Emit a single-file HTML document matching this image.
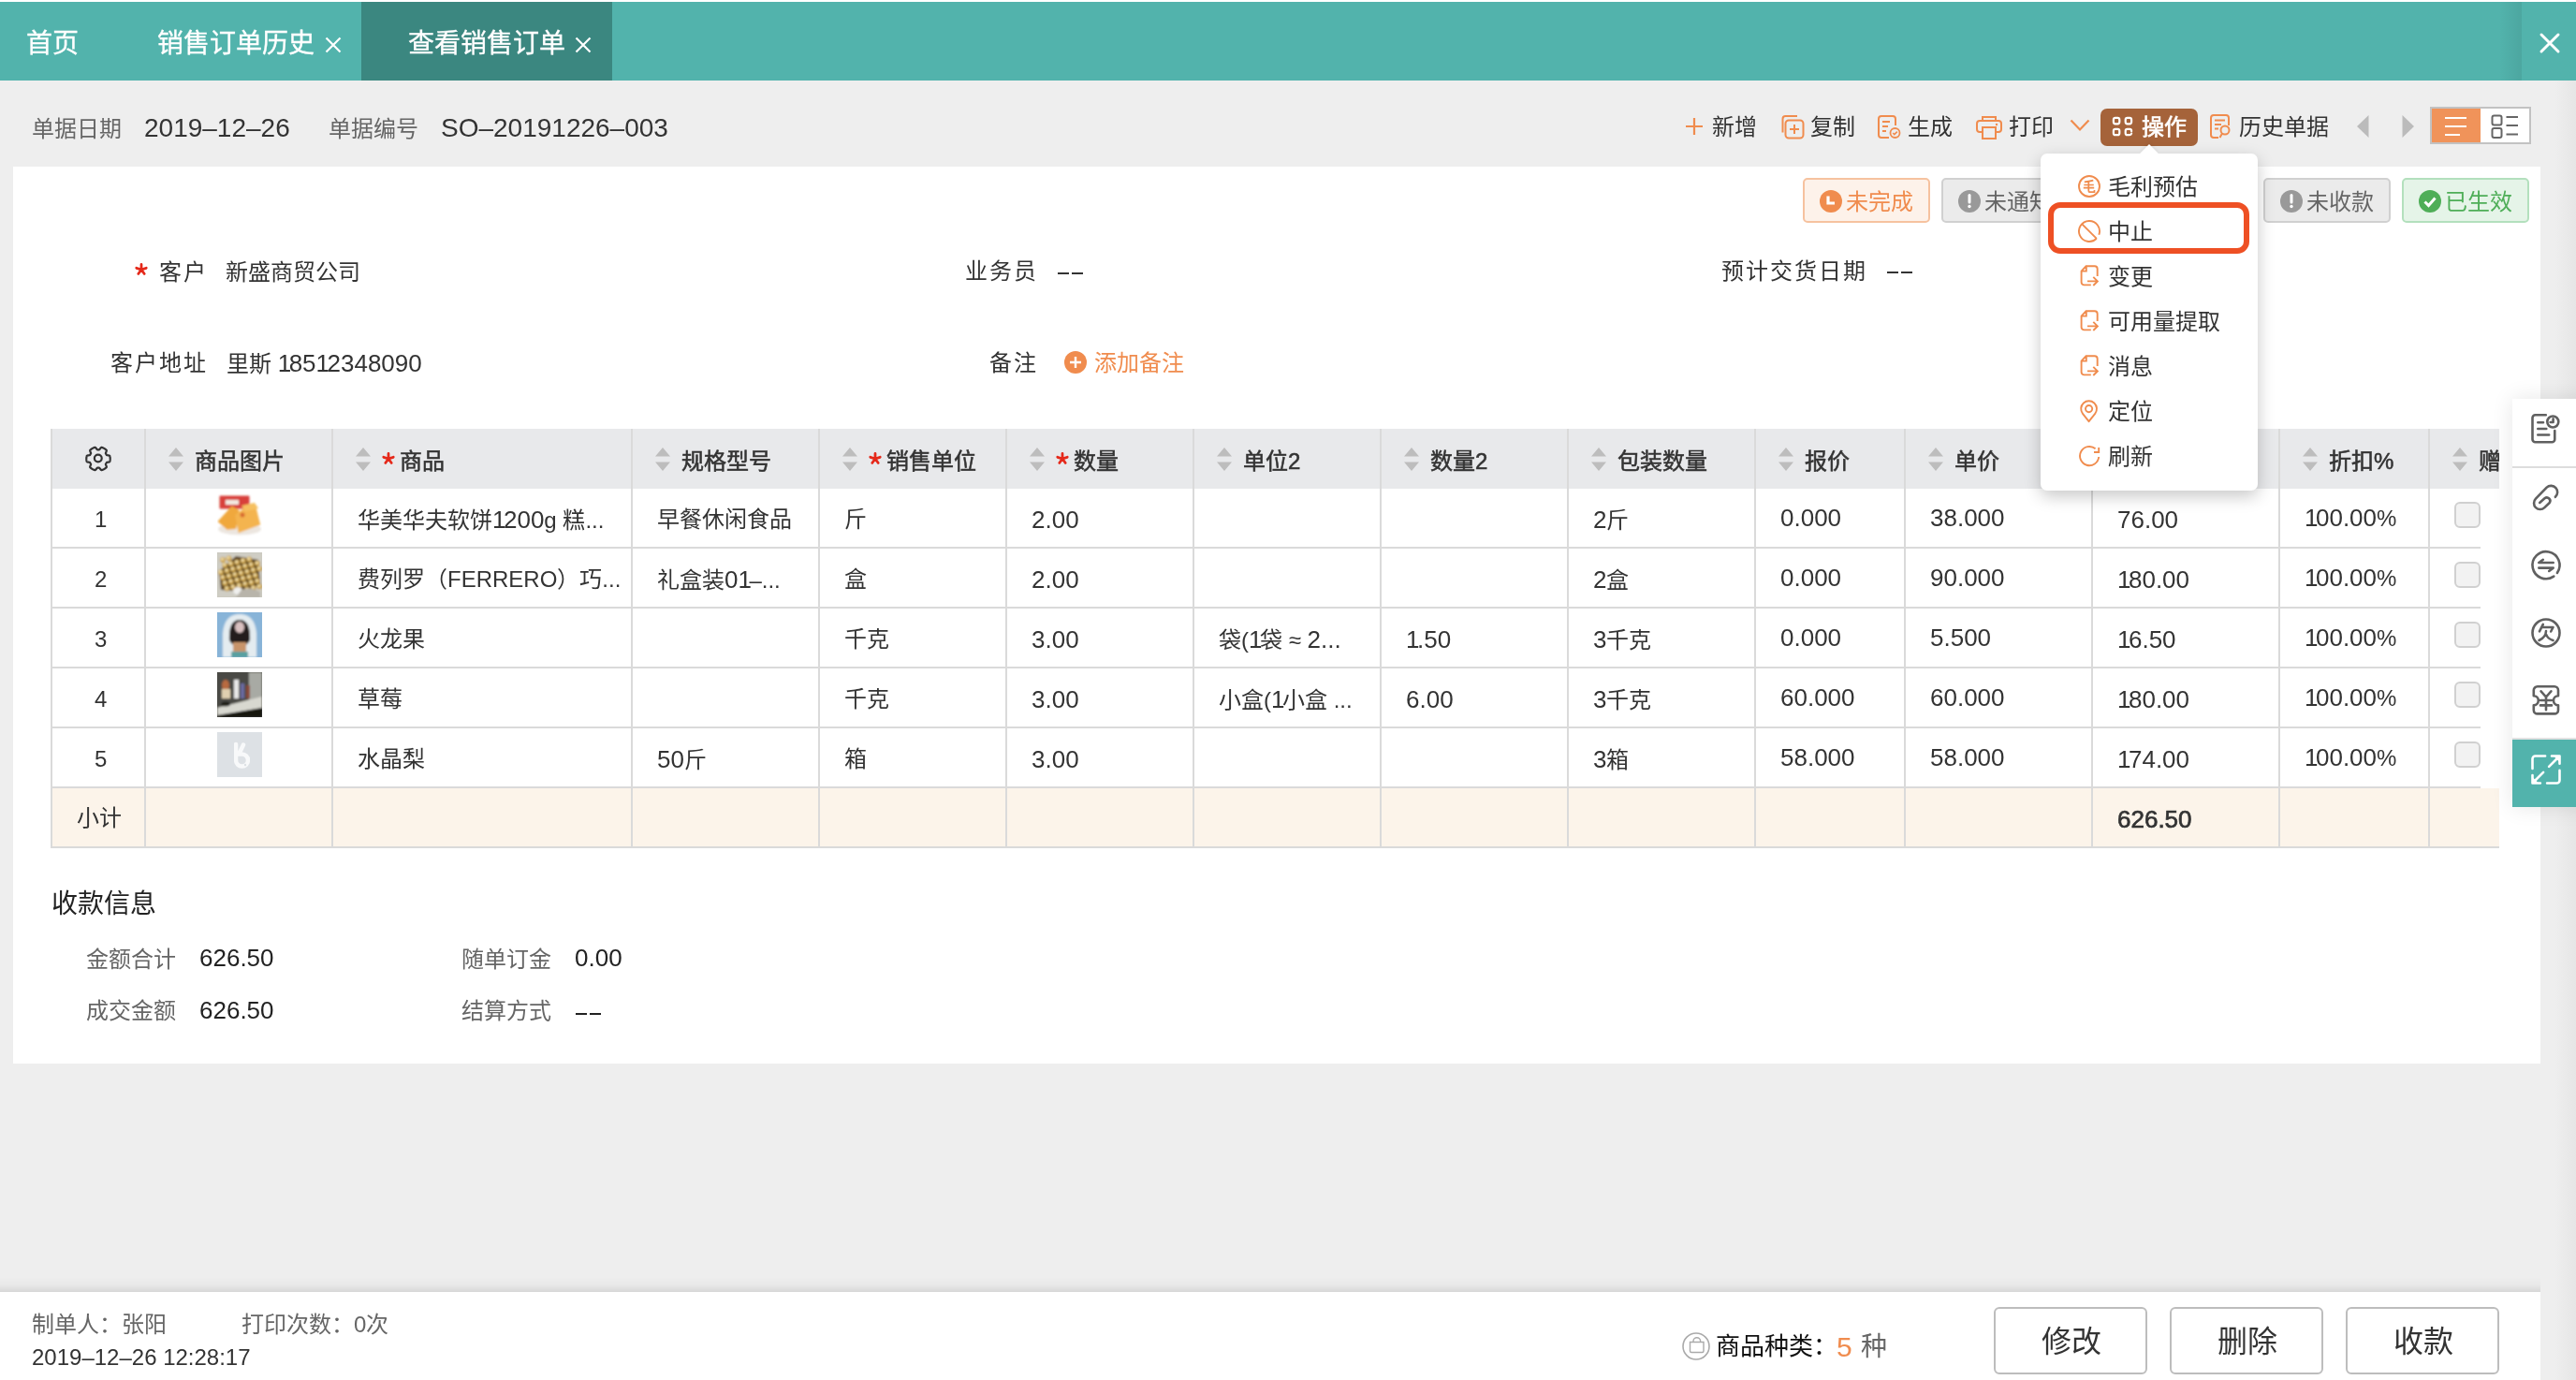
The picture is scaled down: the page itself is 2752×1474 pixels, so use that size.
<!DOCTYPE html>
<html lang="zh-CN"><head><meta charset="utf-8"><title>查看销售订单</title>
<style>
html,body{margin:0;padding:0}
body{width:2752px;height:1474px;position:relative;overflow:hidden;background:#eeeeee;font-family:"Liberation Sans",sans-serif;}
.a{position:absolute;display:block}
.t{position:absolute;white-space:nowrap;line-height:40px;will-change:transform}
.ls{letter-spacing:2px}
.b{font-weight:bold}
</style></head><body>
<div class="a" style="left:0px;top:0px;width:2752px;height:2px;background:#fff"></div>
<div class="a" style="left:0px;top:2px;width:2752px;height:84px;background:#52b3ac"></div>
<div class="a" style="left:386px;top:2px;width:268px;height:84px;background:#3b8780"></div>
<div class="t" style="left:28px;top:26.5px;font-size:28px;color:#fff;-webkit-text-stroke:0.35px #fff">首页</div>
<div class="t" style="left:168px;top:26.5px;font-size:28px;color:#fff;-webkit-text-stroke:0.35px #fff">销售订单历史</div>
<svg class="a" style="left:347px;top:39px;" width="18" height="18" viewBox="0 0 18 18"><path d="M1.5 1.5L16.5 16.5M16.5 1.5L1.5 16.5" stroke="#fff" stroke-width="2.2"/></svg>
<div class="t" style="left:436px;top:26.5px;font-size:28px;color:#fff;-webkit-text-stroke:0.35px #fff">查看销售订单</div>
<svg class="a" style="left:614px;top:39px;" width="18" height="18" viewBox="0 0 18 18"><path d="M1.5 1.5L16.5 16.5M16.5 1.5L1.5 16.5" stroke="#fff" stroke-width="2.2"/></svg>
<div class="a" style="left:2670px;top:2px;width:24px;height:84px;background:linear-gradient(90deg,rgba(0,0,0,0),rgba(0,0,0,0.07))"></div>
<svg class="a" style="left:2712px;top:34px;" width="24" height="24" viewBox="0 0 24 24"><path d="M3 3L21 21M21 3L3 21" stroke="#fff" stroke-width="3" stroke-linecap="round"/></svg>
<div class="t" style="left:34px;top:118.0px;font-size:24px;color:#666;">单据日期</div>
<div class="t" style="left:154px;top:117.0px;font-size:28px;color:#333;">2019–12–26</div>
<div class="t" style="left:351px;top:118.0px;font-size:24px;color:#666;">单据编号</div>
<div class="t" style="left:471px;top:117.0px;font-size:28px;color:#333;">SO–20191226–003</div>
<svg class="a" style="left:1800px;top:125px;" width="20" height="20" viewBox="0 0 20 20"><path d="M10 1V19M1 10H19" stroke="#f08c4e" stroke-width="2.2"/></svg>
<div class="t" style="left:1829px;top:116.0px;font-size:24px;color:#333;">新增</div>
<svg class="a" style="left:1901px;top:122px;" width="27" height="27" viewBox="0 0 27 27"><rect x="6.5" y="6.5" width="19" height="19" rx="3.5" fill="none" stroke="#f08c4e" stroke-width="2"/><path d="M3.5 19.5V5a3 3 0 0 1 3-3H19" fill="none" stroke="#f08c4e" stroke-width="2"/><path d="M16 11V21M11 16H21" stroke="#f08c4e" stroke-width="2"/></svg>
<div class="t" style="left:1934px;top:116.0px;font-size:24px;color:#333;">复制</div>
<svg class="a" style="left:2005px;top:122px;" width="26" height="27" viewBox="0 0 26 27"><path d="M13 25H5a3 3 0 0 1-3-3V5a3 3 0 0 1 3-3h12a3 3 0 0 1 3 3V12" fill="none" stroke="#f08c4e" stroke-width="2"/><path d="M6 8H14M6 13H12M6 18H10" stroke="#f08c4e" stroke-width="2"/><circle cx="19.5" cy="20" r="5" fill="none" stroke="#f08c4e" stroke-width="1.8"/><path d="M17.2 20l1.6 1.6 3-3" fill="none" stroke="#f08c4e" stroke-width="1.6"/></svg>
<div class="t" style="left:2038px;top:116.0px;font-size:24px;color:#333;">生成</div>
<svg class="a" style="left:2111px;top:122px;" width="28" height="27" viewBox="0 0 28 27"><path d="M7 7V3h14v4" fill="none" stroke="#f08c4e" stroke-width="2"/><path d="M7 19H4a3 3 0 0 1-3-3V10a3 3 0 0 1 3-3h20a3 3 0 0 1 3 3v6a3 3 0 0 1-3 3h-3" fill="none" stroke="#f08c4e" stroke-width="2"/><rect x="7" y="14" width="14" height="12" fill="none" stroke="#f08c4e" stroke-width="2"/><circle cx="22" cy="11" r="1.2" fill="#f08c4e"/></svg>
<div class="t" style="left:2146px;top:116.0px;font-size:24px;color:#333;">打印</div>
<svg class="a" style="left:2211px;top:127px;" width="22" height="14" viewBox="0 0 22 14"><path d="M1.5 1.5L11 11.5L20.5 1.5" fill="none" stroke="#f08c4e" stroke-width="2.2"/></svg>
<div class="a" style="left:2244px;top:116px;width:104px;height:40px;background:#a5633a;border-radius:7px"></div>
<svg class="a" style="left:2256px;top:124px;" width="24" height="24" viewBox="0 0 24 24"><g fill="none" stroke="#fff" stroke-width="2.2" stroke-linecap="round"><rect x="1.9" y="1.9" width="6.4" height="6.4" rx="2"/><rect x="14.7" y="1.9" width="6.4" height="6.4" rx="2"/><rect x="1.9" y="13.8" width="6.4" height="6.4" rx="2"/><path d="M21.1 16.2V15.8A2 2 0 0 0 19.1 13.8H16.7A2 2 0 0 0 14.7 15.8V18.2A2 2 0 0 0 16.7 20.2H19.1A2 2 0 0 0 21.1 18.6"/></g></svg>
<div class="t" style="left:2288px;top:116.0px;font-size:24px;color:#fff;-webkit-text-stroke:0.6px #fff">操作</div>
<svg class="a" style="left:2361px;top:122px;" width="23" height="27" viewBox="0 0 23 27"><path d="M9 25H4a3 3 0 0 1-3-3V4a3 3 0 0 1 3-3h13a3 3 0 0 1 3 3V12" fill="none" stroke="#f08c4e" stroke-width="2"/><path d="M5 6.5H16M5 11H12M5 15.5H9" stroke="#f08c4e" stroke-width="2"/><circle cx="16" cy="17" r="4.5" fill="none" stroke="#f08c4e" stroke-width="2"/><path d="M13 20.5L10.5 25" stroke="#f08c4e" stroke-width="2"/></svg>
<div class="t" style="left:2392px;top:116.0px;font-size:24px;color:#333;">历史单据</div>
<svg class="a" style="left:2518px;top:123px;" width="13" height="24" viewBox="0 0 13 24"><path d="M12.5 0V24L0 12Z" fill="#bbb"/></svg>
<svg class="a" style="left:2566px;top:123px;" width="13" height="24" viewBox="0 0 13 24"><path d="M0.5 0V24L13 12Z" fill="#bbb"/></svg>
<div class="a" style="left:2596px;top:114px;width:108px;height:40px;box-sizing:border-box;border:2px solid #c2c2c2;background:#fff"></div>
<div class="a" style="left:2598px;top:116px;width:52px;height:36px;background:#f0935a"></div>
<svg class="a" style="left:2611px;top:124px;" width="26" height="22" viewBox="0 0 26 22"><path d="M1 2H24M1 11H24M1 20H17" stroke="#fff" stroke-width="2"/></svg>
<svg class="a" style="left:2661px;top:122px;" width="30" height="27" viewBox="0 0 30 27"><g fill="none" stroke="#666" stroke-width="2"><rect x="1.5" y="1.5" width="10" height="10" rx="2"/><rect x="1.5" y="15" width="10" height="10" rx="2"/></g><path d="M16.5 3H29M16.5 12H29M16.5 21.5H29" stroke="#666" stroke-width="2"/></svg>
<div class="a" style="left:14px;top:178px;width:2700px;height:958px;background:#fff"></div>
<div class="a" style="left:2714px;top:86px;width:38px;height:1388px;background:linear-gradient(90deg,#eeeeee 40%,#e6e6e6)"></div>
<div class="a" style="left:1926px;top:190px;width:136px;height:48px;box-sizing:border-box;border:2px solid #f6c29f;background:#fdf2ea;border-radius:5px"></div>
<svg class="a" style="left:1944px;top:203px;" width="24" height="24" viewBox="0 0 24 24"><circle cx="12" cy="12" r="12" fill="#f08c4e"/><path d="M9 6.5V14H16" fill="none" stroke="#fff" stroke-width="3.2"/></svg>
<div class="t" style="left:1972px;top:196.0px;font-size:24px;color:#f08c4e;">未完成</div>
<div class="a" style="left:2074px;top:190px;width:136px;height:48px;box-sizing:border-box;border:2px solid #d0d0d0;background:#ebebeb;border-radius:5px"></div>
<svg class="a" style="left:2092px;top:203px;" width="24" height="24" viewBox="0 0 24 24"><circle cx="12" cy="12" r="12" fill="#999"/><path d="M12 5.5V13" stroke="#fff" stroke-width="3" stroke-linecap="round"/><circle cx="12" cy="17.5" r="1.7" fill="#fff"/></svg>
<div class="t" style="left:2120px;top:196.0px;font-size:24px;color:#666;">未通知</div>
<div class="a" style="left:2222px;top:190px;width:136px;height:48px;box-sizing:border-box;border:2px solid #d0d0d0;background:#ebebeb;border-radius:5px"></div>
<svg class="a" style="left:2240px;top:203px;" width="24" height="24" viewBox="0 0 24 24"><circle cx="12" cy="12" r="12" fill="#999"/><path d="M12 5.5V13" stroke="#fff" stroke-width="3" stroke-linecap="round"/><circle cx="12" cy="17.5" r="1.7" fill="#fff"/></svg>
<div class="t" style="left:2268px;top:196.0px;font-size:24px;color:#666;">未审核</div>
<div class="a" style="left:2418px;top:190px;width:136px;height:48px;box-sizing:border-box;border:2px solid #d0d0d0;background:#ebebeb;border-radius:5px"></div>
<svg class="a" style="left:2436px;top:203px;" width="24" height="24" viewBox="0 0 24 24"><circle cx="12" cy="12" r="12" fill="#999"/><path d="M12 5.5V13" stroke="#fff" stroke-width="3" stroke-linecap="round"/><circle cx="12" cy="17.5" r="1.7" fill="#fff"/></svg>
<div class="t" style="left:2464px;top:196.0px;font-size:24px;color:#666;">未收款</div>
<div class="a" style="left:2566px;top:190px;width:136px;height:48px;box-sizing:border-box;border:2px solid #b3e0bd;background:#e5f4e8;border-radius:5px"></div>
<svg class="a" style="left:2584px;top:203px;" width="24" height="24" viewBox="0 0 24 24"><circle cx="12" cy="12" r="12" fill="#4fae58"/><path d="M6.5 12.5L10.5 16.5L17.5 8.5" fill="none" stroke="#fff" stroke-width="3"/></svg>
<div class="t" style="left:2612px;top:196.0px;font-size:24px;color:#4fae58;">已生效</div>
<svg class="a" style="left:144.00px;top:281.40px" width="14.00" height="14.00"><path d="M7.00 7.00L7.00 1.50M7.00 7.00L12.23 5.30M7.00 7.00L10.23 11.45M7.00 7.00L3.77 11.45M7.00 7.00L1.77 5.30" stroke="#e5291a" stroke-width="2.8" stroke-linecap="round"/></svg>
<div class="t" style="left:170px;top:271.0px;font-size:24px;color:#333;letter-spacing:2px">客户</div>
<div class="t" style="left:241px;top:271.0px;font-size:24px;color:#333;">新盛商贸公司</div>
<div class="t" style="left:1031px;top:270.0px;font-size:24px;color:#333;letter-spacing:2px">业务员</div>
<div class="a" style="left:1130px;top:290.5px;width:12px;height:2.0px;background:#333"></div>
<div class="a" style="left:1144.5px;top:290.5px;width:12.0px;height:2.0px;background:#333"></div>
<div class="t" style="left:1839px;top:270.0px;font-size:24px;color:#333;letter-spacing:2px">预计交货日期</div>
<div class="a" style="left:2016px;top:290px;width:12px;height:2px;background:#333"></div>
<div class="a" style="left:2030.5px;top:290px;width:12.0px;height:2px;background:#333"></div>
<div class="t" style="left:118px;top:367.5px;font-size:24px;color:#333;letter-spacing:2px">客户地址</div>
<div class="t" style="left:242px;top:367.5px;font-size:24px;color:#333;">里斯 <span style="font-size:26px"><span style="letter-spacing:-2.5px">1</span>85<span style="letter-spacing:-2.5px">1</span>2348090</span></div>
<div class="t" style="left:1057px;top:368.0px;font-size:24px;color:#333;letter-spacing:2px">备注</div>
<svg class="a" style="left:1137px;top:375px;" width="24" height="24" viewBox="0 0 24 24"><circle cx="12" cy="12" r="12" fill="#f08c4e"/><path d="M12 6V18M6 12H18" stroke="#fff" stroke-width="2.4"/></svg>
<div class="t" style="left:1169px;top:368.0px;font-size:24px;color:#f08c4e;">添加备注</div>
<div class="a" style="left:0;top:0;width:2670px;height:1474px;overflow:hidden">
<div class="a" style="left:54px;top:458px;width:2616px;height:64px;background:#e8e9eb"></div>
<div class="a" style="left:54px;top:842px;width:2616px;height:62px;background:#fcf4ea"></div>
<div class="a" style="left:54px;top:584px;width:2596px;height:2px;background:#dadada"></div>
<div class="a" style="left:54px;top:648px;width:2596px;height:2px;background:#dadada"></div>
<div class="a" style="left:54px;top:712px;width:2596px;height:2px;background:#dadada"></div>
<div class="a" style="left:54px;top:776px;width:2596px;height:2px;background:#dadada"></div>
<div class="a" style="left:54px;top:840px;width:2596px;height:2px;background:#dadada"></div>
<div class="a" style="left:54px;top:904px;width:2616px;height:2px;background:#dadada"></div>
<div class="a" style="left:54px;top:458px;width:2px;height:448px;background:#dadada"></div>
<div class="a" style="left:154px;top:458px;width:2px;height:448px;background:#dadada"></div>
<div class="a" style="left:354px;top:458px;width:2px;height:448px;background:#dadada"></div>
<div class="a" style="left:674px;top:458px;width:2px;height:448px;background:#dadada"></div>
<div class="a" style="left:874px;top:458px;width:2px;height:448px;background:#dadada"></div>
<div class="a" style="left:1074px;top:458px;width:2px;height:448px;background:#dadada"></div>
<div class="a" style="left:1274px;top:458px;width:2px;height:448px;background:#dadada"></div>
<div class="a" style="left:1474px;top:458px;width:2px;height:448px;background:#dadada"></div>
<div class="a" style="left:1674px;top:458px;width:2px;height:448px;background:#dadada"></div>
<div class="a" style="left:1874px;top:458px;width:2px;height:448px;background:#dadada"></div>
<div class="a" style="left:2034px;top:458px;width:2px;height:448px;background:#dadada"></div>
<div class="a" style="left:2234px;top:458px;width:2px;height:448px;background:#dadada"></div>
<div class="a" style="left:2434px;top:458px;width:2px;height:448px;background:#dadada"></div>
<div class="a" style="left:2594px;top:458px;width:2px;height:448px;background:#dadada"></div>
<svg class="a" style="left:180px;top:478px;" width="16" height="25" viewBox="0 0 16 25"><path d="M8 0L16 9.5H0Z M0 15.5H16L8 25Z" fill="#bdbdbd"/></svg>
<div class="t" style="left:208px;top:472.5px;font-size:24px;color:#333;-webkit-text-stroke:0.55px #333">商品图片</div>
<svg class="a" style="left:380px;top:478px;" width="16" height="25" viewBox="0 0 16 25"><path d="M8 0L16 9.5H0Z M0 15.5H16L8 25Z" fill="#bdbdbd"/></svg>
<svg class="a" style="left:408.20px;top:483.10px" width="14.00" height="14.00"><path d="M7.00 7.00L7.00 1.50M7.00 7.00L12.23 5.30M7.00 7.00L10.23 11.45M7.00 7.00L3.77 11.45M7.00 7.00L1.77 5.30" stroke="#e5291a" stroke-width="2.8" stroke-linecap="round"/></svg>
<div class="t" style="left:427px;top:472.5px;font-size:24px;color:#333;-webkit-text-stroke:0.55px #333">商品</div>
<svg class="a" style="left:700px;top:478px;" width="16" height="25" viewBox="0 0 16 25"><path d="M8 0L16 9.5H0Z M0 15.5H16L8 25Z" fill="#bdbdbd"/></svg>
<div class="t" style="left:728px;top:472.5px;font-size:24px;color:#333;-webkit-text-stroke:0.55px #333">规格型号</div>
<svg class="a" style="left:900px;top:478px;" width="16" height="25" viewBox="0 0 16 25"><path d="M8 0L16 9.5H0Z M0 15.5H16L8 25Z" fill="#bdbdbd"/></svg>
<svg class="a" style="left:928.20px;top:483.10px" width="14.00" height="14.00"><path d="M7.00 7.00L7.00 1.50M7.00 7.00L12.23 5.30M7.00 7.00L10.23 11.45M7.00 7.00L3.77 11.45M7.00 7.00L1.77 5.30" stroke="#e5291a" stroke-width="2.8" stroke-linecap="round"/></svg>
<div class="t" style="left:947px;top:472.5px;font-size:24px;color:#333;-webkit-text-stroke:0.55px #333">销售单位</div>
<svg class="a" style="left:1100px;top:478px;" width="16" height="25" viewBox="0 0 16 25"><path d="M8 0L16 9.5H0Z M0 15.5H16L8 25Z" fill="#bdbdbd"/></svg>
<svg class="a" style="left:1128.20px;top:483.10px" width="14.00" height="14.00"><path d="M7.00 7.00L7.00 1.50M7.00 7.00L12.23 5.30M7.00 7.00L10.23 11.45M7.00 7.00L3.77 11.45M7.00 7.00L1.77 5.30" stroke="#e5291a" stroke-width="2.8" stroke-linecap="round"/></svg>
<div class="t" style="left:1147px;top:472.5px;font-size:24px;color:#333;-webkit-text-stroke:0.55px #333">数量</div>
<svg class="a" style="left:1300px;top:478px;" width="16" height="25" viewBox="0 0 16 25"><path d="M8 0L16 9.5H0Z M0 15.5H16L8 25Z" fill="#bdbdbd"/></svg>
<div class="t" style="left:1328px;top:472.5px;font-size:24px;color:#333;-webkit-text-stroke:0.55px #333">单位2</div>
<svg class="a" style="left:1500px;top:478px;" width="16" height="25" viewBox="0 0 16 25"><path d="M8 0L16 9.5H0Z M0 15.5H16L8 25Z" fill="#bdbdbd"/></svg>
<div class="t" style="left:1528px;top:472.5px;font-size:24px;color:#333;-webkit-text-stroke:0.55px #333">数量2</div>
<svg class="a" style="left:1700px;top:478px;" width="16" height="25" viewBox="0 0 16 25"><path d="M8 0L16 9.5H0Z M0 15.5H16L8 25Z" fill="#bdbdbd"/></svg>
<div class="t" style="left:1728px;top:472.5px;font-size:24px;color:#333;-webkit-text-stroke:0.55px #333">包装数量</div>
<svg class="a" style="left:1900px;top:478px;" width="16" height="25" viewBox="0 0 16 25"><path d="M8 0L16 9.5H0Z M0 15.5H16L8 25Z" fill="#bdbdbd"/></svg>
<div class="t" style="left:1928px;top:472.5px;font-size:24px;color:#333;-webkit-text-stroke:0.55px #333">报价</div>
<svg class="a" style="left:2060px;top:478px;" width="16" height="25" viewBox="0 0 16 25"><path d="M8 0L16 9.5H0Z M0 15.5H16L8 25Z" fill="#bdbdbd"/></svg>
<div class="t" style="left:2088px;top:472.5px;font-size:24px;color:#333;-webkit-text-stroke:0.55px #333">单价</div>
<svg class="a" style="left:2260px;top:478px;" width="16" height="25" viewBox="0 0 16 25"><path d="M8 0L16 9.5H0Z M0 15.5H16L8 25Z" fill="#bdbdbd"/></svg>
<div class="t" style="left:2288px;top:472.5px;font-size:24px;color:#333;-webkit-text-stroke:0.55px #333">金额</div>
<svg class="a" style="left:2460px;top:478px;" width="16" height="25" viewBox="0 0 16 25"><path d="M8 0L16 9.5H0Z M0 15.5H16L8 25Z" fill="#bdbdbd"/></svg>
<div class="t" style="left:2488px;top:472.5px;font-size:24px;color:#333;-webkit-text-stroke:0.55px #333">折扣%</div>
<svg class="a" style="left:2620px;top:478px;" width="16" height="25" viewBox="0 0 16 25"><path d="M8 0L16 9.5H0Z M0 15.5H16L8 25Z" fill="#bdbdbd"/></svg>
<div class="t" style="left:2648px;top:472.5px;font-size:24px;color:#333;-webkit-text-stroke:0.55px #333">赠品</div>
<svg class="a" style="left:90px;top:474.5px;" width="30" height="30" viewBox="0 0 30 30"><path d="M27.70 15.00L27.70 15.22L27.69 15.44L27.68 15.66L27.67 15.89L27.65 16.11L27.63 16.33L27.61 16.55L27.58 16.77L27.54 16.99L27.51 17.21L27.47 17.42L27.42 17.64L27.37 17.86L27.27 18.06L27.07 18.23L26.79 18.38L26.43 18.49L26.02 18.58L25.59 18.65L25.16 18.70L24.76 18.74L24.40 18.80L24.11 18.87L23.91 18.97L23.79 19.10L23.72 19.25L23.64 19.40L23.56 19.55L23.48 19.70L23.40 19.85L23.31 20.00L23.23 20.14L23.14 20.28L23.04 20.42L22.95 20.56L22.89 20.73L22.91 20.96L22.99 21.24L23.12 21.58L23.28 21.95L23.45 22.35L23.61 22.75L23.74 23.15L23.82 23.52L23.84 23.84L23.79 24.10L23.66 24.29L23.50 24.44L23.33 24.58L23.16 24.73L22.99 24.87L22.82 25.01L22.64 25.14L22.46 25.27L22.28 25.40L22.10 25.53L21.92 25.65L21.73 25.77L21.54 25.89L21.35 26.00L21.16 26.11L20.96 26.21L20.77 26.32L20.57 26.41L20.37 26.51L20.17 26.60L19.96 26.69L19.76 26.78L19.55 26.86L19.34 26.93L19.13 27.01L18.92 27.08L18.71 27.15L18.49 27.16L18.23 27.07L17.97 26.90L17.69 26.64L17.41 26.33L17.14 25.99L16.88 25.65L16.63 25.32L16.41 25.04L16.21 24.83L16.02 24.70L15.85 24.66L15.68 24.68L15.51 24.69L15.34 24.69L15.17 24.70L15.00 24.70L14.83 24.70L14.66 24.69L14.49 24.69L14.32 24.68L14.15 24.66L13.98 24.70L13.79 24.83L13.59 25.04L13.37 25.32L13.12 25.65L12.86 25.99L12.59 26.33L12.31 26.64L12.03 26.90L11.77 27.07L11.51 27.16L11.29 27.15L11.08 27.08L10.87 27.01L10.66 26.93L10.45 26.86L10.24 26.78L10.04 26.69L9.83 26.60L9.63 26.51L9.43 26.41L9.23 26.32L9.04 26.21L8.84 26.11L8.65 26.00L8.46 25.89L8.27 25.77L8.08 25.65L7.90 25.53L7.72 25.40L7.54 25.27L7.36 25.14L7.18 25.01L7.01 24.87L6.84 24.73L6.67 24.58L6.50 24.44L6.34 24.29L6.21 24.10L6.16 23.84L6.18 23.52L6.26 23.15L6.39 22.75L6.55 22.35L6.72 21.95L6.88 21.58L7.01 21.24L7.09 20.96L7.11 20.73L7.05 20.56L6.96 20.42L6.86 20.28L6.77 20.14L6.69 20.00L6.60 19.85L6.52 19.70L6.44 19.55L6.36 19.40L6.28 19.25L6.21 19.10L6.09 18.97L5.89 18.87L5.60 18.80L5.24 18.74L4.84 18.70L4.41 18.65L3.98 18.58L3.57 18.49L3.21 18.38L2.93 18.23L2.73 18.06L2.63 17.86L2.58 17.64L2.53 17.42L2.49 17.21L2.46 16.99L2.42 16.77L2.39 16.55L2.37 16.33L2.35 16.11L2.33 15.89L2.32 15.66L2.31 15.44L2.30 15.22L2.30 15.00L2.30 14.78L2.31 14.56L2.32 14.34L2.33 14.11L2.35 13.89L2.37 13.67L2.39 13.45L2.42 13.23L2.46 13.01L2.49 12.79L2.53 12.58L2.58 12.36L2.63 12.14L2.73 11.94L2.93 11.77L3.21 11.62L3.57 11.51L3.98 11.42L4.41 11.35L4.84 11.30L5.24 11.26L5.60 11.20L5.89 11.13L6.09 11.03L6.21 10.90L6.28 10.75L6.36 10.60L6.44 10.45L6.52 10.30L6.60 10.15L6.69 10.00L6.77 9.86L6.86 9.72L6.96 9.58L7.05 9.44L7.11 9.27L7.09 9.04L7.01 8.76L6.88 8.42L6.72 8.05L6.55 7.65L6.39 7.25L6.26 6.85L6.18 6.48L6.16 6.16L6.21 5.90L6.34 5.71L6.50 5.56L6.67 5.42L6.84 5.27L7.01 5.13L7.18 4.99L7.36 4.86L7.54 4.73L7.72 4.60L7.90 4.47L8.08 4.35L8.27 4.23L8.46 4.11L8.65 4.00L8.84 3.89L9.04 3.79L9.23 3.68L9.43 3.59L9.63 3.49L9.83 3.40L10.04 3.31L10.24 3.22L10.45 3.14L10.66 3.07L10.87 2.99L11.08 2.92L11.29 2.85L11.51 2.84L11.77 2.93L12.03 3.10L12.31 3.36L12.59 3.67L12.86 4.01L13.12 4.35L13.37 4.68L13.59 4.96L13.79 5.17L13.98 5.30L14.15 5.34L14.32 5.32L14.49 5.31L14.66 5.31L14.83 5.30L15.00 5.30L15.17 5.30L15.34 5.31L15.51 5.31L15.68 5.32L15.85 5.34L16.02 5.30L16.21 5.17L16.41 4.96L16.63 4.68L16.88 4.35L17.14 4.01L17.41 3.67L17.69 3.36L17.97 3.10L18.23 2.93L18.49 2.84L18.71 2.85L18.92 2.92L19.13 2.99L19.34 3.07L19.55 3.14L19.76 3.22L19.96 3.31L20.17 3.40L20.37 3.49L20.57 3.59L20.77 3.68L20.96 3.79L21.16 3.89L21.35 4.00L21.54 4.11L21.73 4.23L21.92 4.35L22.10 4.47L22.28 4.60L22.46 4.73L22.64 4.86L22.82 4.99L22.99 5.13L23.16 5.27L23.33 5.42L23.50 5.56L23.66 5.71L23.79 5.90L23.84 6.16L23.82 6.48L23.74 6.85L23.61 7.25L23.45 7.65L23.28 8.05L23.12 8.42L22.99 8.76L22.91 9.04L22.89 9.27L22.95 9.44L23.04 9.58L23.14 9.72L23.23 9.86L23.31 10.00L23.40 10.15L23.48 10.30L23.56 10.45L23.64 10.60L23.72 10.75L23.79 10.90L23.91 11.03L24.11 11.13L24.40 11.20L24.76 11.26L25.16 11.30L25.59 11.35L26.02 11.42L26.43 11.51L26.79 11.62L27.07 11.77L27.27 11.94L27.37 12.14L27.42 12.36L27.47 12.58L27.51 12.79L27.54 13.01L27.58 13.23L27.61 13.45L27.63 13.67L27.65 13.89L27.67 14.11L27.68 14.34L27.69 14.56L27.70 14.78Z" fill="none" stroke="#333" stroke-width="2.2" stroke-linejoin="round"/><circle cx="14.8" cy="14.5" r="3.9" fill="none" stroke="#333" stroke-width="2.2"/></svg>
<div class="t" style="left:101px;top:535.0px;font-size:24px;color:#333;">1</div>
<svg class="a" style="left:232px;top:526px" width="48" height="48" viewBox="0 0 48 48"><defs><filter id="bl526" x="-10%" y="-10%" width="120%" height="120%"><feGaussianBlur stdDeviation="0.8"/></filter><clipPath id="cp526"><rect width="48" height="48"/></clipPath></defs><g clip-path="url(#cp526)"><rect width="48" height="48" fill="#fff"/><g filter="url(#bl526)"><ellipse cx="24" cy="39" rx="23" ry="6.5" fill="#ece6e0"/><rect x="2.5" y="3.5" width="32" height="14" rx="1" fill="#d8403a"/><rect x="9" y="8" width="14" height="5" fill="#f2e8e0"/><polygon points="0.5,31 15.7,14.5 23.6,18.9 20.1,38.9 10.5,39.7" fill="#f0a83e"/><polygon points="19.2,24.1 30.5,15.4 41.8,17.1 46.2,34.5 22.7,43.2" fill="#f4b450"/><polygon points="26,14 40,11 44,17 30,20" fill="#f6c060"/><circle cx="27" cy="24" r="2.5" fill="#d86a30"/></g></g></svg>
<div class="t" style="left:382px;top:535.0px;font-size:24px;color:#333;">华美华夫软饼<span style="font-size:26px"><span style="letter-spacing:-2.5px">1</span>200</span>g 糕...</div>
<div class="t" style="left:702px;top:535.0px;font-size:24px;color:#333;">早餐休闲食品</div>
<div class="t" style="left:902px;top:535.0px;font-size:24px;color:#333;">斤</div>
<div class="t" style="left:1102px;top:535.0px;font-size:24px;color:#333;"><span style="font-size:26px">2.00</span></div>
<div class="t" style="left:1702px;top:535.0px;font-size:24px;color:#333;"><span style="font-size:26px">2</span>斤</div>
<div class="t" style="left:1902px;top:533.0px;font-size:24px;color:#333;"><span style="font-size:26px">0.000</span></div>
<div class="t" style="left:2062px;top:533.0px;font-size:24px;color:#333;"><span style="font-size:26px">38.000</span></div>
<div class="t" style="left:2262px;top:535.0px;font-size:24px;color:#333;"><span style="font-size:26px">76.00</span></div>
<div class="t" style="left:2462px;top:533.0px;font-size:24px;color:#333;"><span style="font-size:26px"><span style="letter-spacing:-2.5px">1</span>00.00</span>%</div>
<div class="a" style="left:2622px;top:536px;width:28px;height:28px;box-sizing:border-box;border:2px solid #d0d0d0;background:#f2f2f2;border-radius:6px"></div>
<div class="t" style="left:101px;top:599.0px;font-size:24px;color:#333;">2</div>
<svg class="a" style="left:232px;top:590px" width="48" height="48" viewBox="0 0 48 48"><defs><filter id="bl590" x="-10%" y="-10%" width="120%" height="120%"><feGaussianBlur stdDeviation="0.9"/></filter><clipPath id="cp590"><rect width="48" height="48"/></clipPath></defs><g clip-path="url(#cp590)"><rect width="48" height="48" fill="#c8c6bc"/><g filter="url(#bl590)"><rect width="48" height="48" fill="#cfcdc4"/><polygon points="2,20 20,4 44,8 46,34 30,42 4,40" fill="#5e4a2a"/><circle cx="3.9" cy="21.2" r="2.9" fill="#c9a048"/><circle cx="3.4" cy="20.5" r="1.5" fill="#f2e2b0"/><circle cx="6.1" cy="27.0" r="2.9" fill="#c9a048"/><circle cx="5.6" cy="26.3" r="1.5" fill="#f2e2b0"/><circle cx="8.3" cy="32.8" r="2.9" fill="#c9a048"/><circle cx="7.8" cy="32.1" r="1.5" fill="#f2e2b0"/><circle cx="10.5" cy="38.6" r="2.9" fill="#c9a048"/><circle cx="10.0" cy="37.9" r="1.5" fill="#f2e2b0"/><circle cx="6.0" cy="8.0" r="2.9" fill="#c9a048"/><circle cx="5.5" cy="7.3" r="1.5" fill="#f2e2b0"/><circle cx="8.2" cy="13.8" r="2.9" fill="#c9a048"/><circle cx="7.7" cy="13.1" r="1.5" fill="#f2e2b0"/><circle cx="10.4" cy="19.6" r="2.9" fill="#c9a048"/><circle cx="9.9" cy="18.9" r="1.5" fill="#f2e2b0"/><circle cx="12.6" cy="25.4" r="2.9" fill="#c9a048"/><circle cx="12.1" cy="24.7" r="1.5" fill="#f2e2b0"/><circle cx="14.8" cy="31.2" r="2.9" fill="#c9a048"/><circle cx="14.3" cy="30.5" r="1.5" fill="#f2e2b0"/><circle cx="17.0" cy="37.0" r="2.9" fill="#c9a048"/><circle cx="16.5" cy="36.3" r="1.5" fill="#f2e2b0"/><circle cx="12.5" cy="6.4" r="2.9" fill="#c9a048"/><circle cx="12.0" cy="5.7" r="1.5" fill="#f2e2b0"/><circle cx="14.7" cy="12.2" r="2.9" fill="#c9a048"/><circle cx="14.2" cy="11.5" r="1.5" fill="#f2e2b0"/><circle cx="16.9" cy="18.0" r="2.9" fill="#c9a048"/><circle cx="16.4" cy="17.3" r="1.5" fill="#f2e2b0"/><circle cx="19.1" cy="23.8" r="2.9" fill="#c9a048"/><circle cx="18.6" cy="23.1" r="1.5" fill="#f2e2b0"/><circle cx="21.3" cy="29.6" r="2.9" fill="#c9a048"/><circle cx="20.8" cy="28.9" r="1.5" fill="#f2e2b0"/><circle cx="23.5" cy="35.4" r="2.9" fill="#c9a048"/><circle cx="23.0" cy="34.7" r="1.5" fill="#f2e2b0"/><circle cx="21.2" cy="10.6" r="2.9" fill="#c9a048"/><circle cx="20.7" cy="9.9" r="1.5" fill="#f2e2b0"/><circle cx="23.4" cy="16.4" r="2.9" fill="#c9a048"/><circle cx="22.9" cy="15.7" r="1.5" fill="#f2e2b0"/><circle cx="25.6" cy="22.2" r="2.9" fill="#c9a048"/><circle cx="25.1" cy="21.5" r="1.5" fill="#f2e2b0"/><circle cx="27.8" cy="28.0" r="2.9" fill="#c9a048"/><circle cx="27.3" cy="27.3" r="1.5" fill="#f2e2b0"/><circle cx="30.0" cy="33.8" r="2.9" fill="#c9a048"/><circle cx="29.5" cy="33.1" r="1.5" fill="#f2e2b0"/><circle cx="32.2" cy="39.6" r="2.9" fill="#c9a048"/><circle cx="31.7" cy="38.9" r="1.5" fill="#f2e2b0"/><circle cx="27.7" cy="9.0" r="2.9" fill="#c9a048"/><circle cx="27.2" cy="8.3" r="1.5" fill="#f2e2b0"/><circle cx="29.9" cy="14.8" r="2.9" fill="#c9a048"/><circle cx="29.4" cy="14.1" r="1.5" fill="#f2e2b0"/><circle cx="32.1" cy="20.6" r="2.9" fill="#c9a048"/><circle cx="31.6" cy="19.9" r="1.5" fill="#f2e2b0"/><circle cx="34.3" cy="26.4" r="2.9" fill="#c9a048"/><circle cx="33.8" cy="25.7" r="1.5" fill="#f2e2b0"/><circle cx="36.5" cy="32.2" r="2.9" fill="#c9a048"/><circle cx="36.0" cy="31.5" r="1.5" fill="#f2e2b0"/><circle cx="38.7" cy="38.0" r="2.9" fill="#c9a048"/><circle cx="38.2" cy="37.3" r="1.5" fill="#f2e2b0"/><circle cx="34.2" cy="7.4" r="2.9" fill="#c9a048"/><circle cx="33.7" cy="6.7" r="1.5" fill="#f2e2b0"/><circle cx="36.4" cy="13.2" r="2.9" fill="#c9a048"/><circle cx="35.9" cy="12.5" r="1.5" fill="#f2e2b0"/><circle cx="38.6" cy="19.0" r="2.9" fill="#c9a048"/><circle cx="38.1" cy="18.3" r="1.5" fill="#f2e2b0"/><circle cx="40.8" cy="24.8" r="2.9" fill="#c9a048"/><circle cx="40.3" cy="24.1" r="1.5" fill="#f2e2b0"/><circle cx="43.0" cy="30.6" r="2.9" fill="#c9a048"/><circle cx="42.5" cy="29.9" r="1.5" fill="#f2e2b0"/><circle cx="45.2" cy="36.4" r="2.9" fill="#c9a048"/><circle cx="44.7" cy="35.7" r="1.5" fill="#f2e2b0"/><circle cx="42.9" cy="11.6" r="2.9" fill="#c9a048"/><circle cx="42.4" cy="10.9" r="1.5" fill="#f2e2b0"/><circle cx="45.1" cy="17.4" r="2.9" fill="#c9a048"/><circle cx="44.6" cy="16.7" r="1.5" fill="#f2e2b0"/><ellipse cx="22" cy="41" rx="5" ry="4" fill="#f0f0ee"/><path d="M26 40Q36 36 46 42V48H20Z" fill="#b8b4aa"/></g></g></svg>
<div class="t" style="left:382px;top:599.0px;font-size:24px;color:#333;">费列罗（FERRERO）巧...</div>
<div class="t" style="left:702px;top:599.0px;font-size:24px;color:#333;">礼盒装<span style="font-size:26px">0<span style="letter-spacing:-2.5px">1</span></span>–...</div>
<div class="t" style="left:902px;top:599.0px;font-size:24px;color:#333;">盒</div>
<div class="t" style="left:1102px;top:599.0px;font-size:24px;color:#333;"><span style="font-size:26px">2.00</span></div>
<div class="t" style="left:1702px;top:599.0px;font-size:24px;color:#333;"><span style="font-size:26px">2</span>盒</div>
<div class="t" style="left:1902px;top:597.0px;font-size:24px;color:#333;"><span style="font-size:26px">0.000</span></div>
<div class="t" style="left:2062px;top:597.0px;font-size:24px;color:#333;"><span style="font-size:26px">90.000</span></div>
<div class="t" style="left:2262px;top:599.0px;font-size:24px;color:#333;"><span style="font-size:26px"><span style="letter-spacing:-2.5px">1</span>80.00</span></div>
<div class="t" style="left:2462px;top:597.0px;font-size:24px;color:#333;"><span style="font-size:26px"><span style="letter-spacing:-2.5px">1</span>00.00</span>%</div>
<div class="a" style="left:2622px;top:600px;width:28px;height:28px;box-sizing:border-box;border:2px solid #d0d0d0;background:#f2f2f2;border-radius:6px"></div>
<div class="t" style="left:101px;top:663.0px;font-size:24px;color:#333;">3</div>
<svg class="a" style="left:232px;top:654px" width="48" height="48" viewBox="0 0 48 48"><defs><filter id="bl654" x="-10%" y="-10%" width="120%" height="120%"><feGaussianBlur stdDeviation="1.0"/></filter><clipPath id="cp654"><rect width="48" height="48"/></clipPath></defs><g clip-path="url(#cp654)"><rect width="48" height="48" fill="#88b4d8"/><g filter="url(#bl654)"><rect width="48" height="48" fill="#88b4d8"/><path d="M6 48V22Q8 2 24 2Q40 2 42 22V48Z" fill="#e4ecf0"/><path d="M13 30Q12 8 24 8Q36 8 35 30Q30 38 24 36Q18 38 13 30Z" fill="#241c1c"/><ellipse cx="24" cy="16" rx="5" ry="6" fill="#d8c0c0"/><rect x="17" y="32" width="14" height="10" fill="#c8946a"/><rect x="15" y="42" width="18" height="6" fill="#58a0a0"/></g></g></svg>
<div class="t" style="left:382px;top:663.0px;font-size:24px;color:#333;">火龙果</div>
<div class="t" style="left:902px;top:663.0px;font-size:24px;color:#333;">千克</div>
<div class="t" style="left:1102px;top:663.0px;font-size:24px;color:#333;"><span style="font-size:26px">3.00</span></div>
<div class="t" style="left:1302px;top:663.0px;font-size:24px;color:#333;">袋(<span style="font-size:26px"><span style="letter-spacing:-2.5px">1</span></span>袋 ≈ <span style="font-size:26px">2...</span></div>
<div class="t" style="left:1502px;top:663.0px;font-size:24px;color:#333;"><span style="font-size:26px"><span style="letter-spacing:-2.5px">1</span>.50</span></div>
<div class="t" style="left:1702px;top:663.0px;font-size:24px;color:#333;"><span style="font-size:26px">3</span>千克</div>
<div class="t" style="left:1902px;top:661.0px;font-size:24px;color:#333;"><span style="font-size:26px">0.000</span></div>
<div class="t" style="left:2062px;top:661.0px;font-size:24px;color:#333;"><span style="font-size:26px">5.500</span></div>
<div class="t" style="left:2262px;top:663.0px;font-size:24px;color:#333;"><span style="font-size:26px"><span style="letter-spacing:-2.5px">1</span>6.50</span></div>
<div class="t" style="left:2462px;top:661.0px;font-size:24px;color:#333;"><span style="font-size:26px"><span style="letter-spacing:-2.5px">1</span>00.00</span>%</div>
<div class="a" style="left:2622px;top:664px;width:28px;height:28px;box-sizing:border-box;border:2px solid #d0d0d0;background:#f2f2f2;border-radius:6px"></div>
<div class="t" style="left:101px;top:727.0px;font-size:24px;color:#333;">4</div>
<svg class="a" style="left:232px;top:718px" width="48" height="48" viewBox="0 0 48 48"><defs><filter id="bl718" x="-10%" y="-10%" width="120%" height="120%"><feGaussianBlur stdDeviation="1.0"/></filter><clipPath id="cp718"><rect width="48" height="48"/></clipPath></defs><g clip-path="url(#cp718)"><rect width="48" height="48" fill="#4a4a44"/><g filter="url(#bl718)"><rect width="48" height="48" fill="#4a4a44"/><rect x="34" y="0" width="14" height="30" fill="#a8aaa4"/><path d="M0 38L48 26V40L0 48Z" fill="#d8d8d0"/><path d="M0 46L48 38V48H0Z" fill="#121210"/><ellipse cx="9" cy="14" rx="4" ry="6" fill="#b86a40"/><rect x="5" y="18" width="9" height="10" fill="#e0d0b0"/><ellipse cx="9" cy="34" rx="5" ry="2.5" fill="#1a1a18"/><rect x="18" y="8" width="5" height="20" fill="#e8e8e8"/><rect x="25" y="12" width="4" height="16" fill="#6a6aa0"/><rect x="31" y="14" width="4" height="14" fill="#8a4a3a"/></g></g></svg>
<div class="t" style="left:382px;top:727.0px;font-size:24px;color:#333;">草莓</div>
<div class="t" style="left:902px;top:727.0px;font-size:24px;color:#333;">千克</div>
<div class="t" style="left:1102px;top:727.0px;font-size:24px;color:#333;"><span style="font-size:26px">3.00</span></div>
<div class="t" style="left:1302px;top:727.0px;font-size:24px;color:#333;">小盒(<span style="font-size:26px"><span style="letter-spacing:-2.5px">1</span></span>小盒 ...</div>
<div class="t" style="left:1502px;top:727.0px;font-size:24px;color:#333;"><span style="font-size:26px">6.00</span></div>
<div class="t" style="left:1702px;top:727.0px;font-size:24px;color:#333;"><span style="font-size:26px">3</span>千克</div>
<div class="t" style="left:1902px;top:725.0px;font-size:24px;color:#333;"><span style="font-size:26px">60.000</span></div>
<div class="t" style="left:2062px;top:725.0px;font-size:24px;color:#333;"><span style="font-size:26px">60.000</span></div>
<div class="t" style="left:2262px;top:727.0px;font-size:24px;color:#333;"><span style="font-size:26px"><span style="letter-spacing:-2.5px">1</span>80.00</span></div>
<div class="t" style="left:2462px;top:725.0px;font-size:24px;color:#333;"><span style="font-size:26px"><span style="letter-spacing:-2.5px">1</span>00.00</span>%</div>
<div class="a" style="left:2622px;top:728px;width:28px;height:28px;box-sizing:border-box;border:2px solid #d0d0d0;background:#f2f2f2;border-radius:6px"></div>
<div class="t" style="left:101px;top:791.0px;font-size:24px;color:#333;">5</div>
<svg class="a" style="left:232px;top:782px" width="48" height="48" viewBox="0 0 48 48"><defs><filter id="bl782" x="-10%" y="-10%" width="120%" height="120%"><feGaussianBlur stdDeviation="0.7"/></filter><clipPath id="cp782"><rect width="48" height="48"/></clipPath></defs><g clip-path="url(#cp782)"><rect width="48" height="48" fill="#dde1e5"/><g filter="url(#bl782)"><path d="M20 13V30a6.5 6.5 0 1 0 6.5-6.5H22M28 13.5L23.5 23" fill="none" stroke="#f8f9fa" stroke-width="4.5" stroke-linecap="round"/><circle cx="30" cy="35" r="1.2" fill="#dde1e5"/></g></g></svg>
<div class="t" style="left:382px;top:791.0px;font-size:24px;color:#333;">水晶梨</div>
<div class="t" style="left:702px;top:791.0px;font-size:24px;color:#333;"><span style="font-size:26px">50</span>斤</div>
<div class="t" style="left:902px;top:791.0px;font-size:24px;color:#333;">箱</div>
<div class="t" style="left:1102px;top:791.0px;font-size:24px;color:#333;"><span style="font-size:26px">3.00</span></div>
<div class="t" style="left:1702px;top:791.0px;font-size:24px;color:#333;"><span style="font-size:26px">3</span>箱</div>
<div class="t" style="left:1902px;top:789.0px;font-size:24px;color:#333;"><span style="font-size:26px">58.000</span></div>
<div class="t" style="left:2062px;top:789.0px;font-size:24px;color:#333;"><span style="font-size:26px">58.000</span></div>
<div class="t" style="left:2262px;top:791.0px;font-size:24px;color:#333;"><span style="font-size:26px"><span style="letter-spacing:-2.5px">1</span>74.00</span></div>
<div class="t" style="left:2462px;top:789.0px;font-size:24px;color:#333;"><span style="font-size:26px"><span style="letter-spacing:-2.5px">1</span>00.00</span>%</div>
<div class="a" style="left:2622px;top:792px;width:28px;height:28px;box-sizing:border-box;border:2px solid #d0d0d0;background:#f2f2f2;border-radius:6px"></div>
<div class="t" style="left:82px;top:854.0px;font-size:24px;color:#333;">小计</div>
<div class="t" style="left:2262px;top:855.0px;font-size:24px;color:#333;-webkit-text-stroke:0.7px #333"><span style="font-size:26px">626.50</span></div>
</div>
<div class="a" style="left:2684px;top:426px;width:88px;height:436px;background:#fff;box-shadow:0 0 22px rgba(0,0,0,0.10)"></div>
<div class="a" style="left:2684px;top:498px;width:68px;height:2px;background:#ddd"></div>
<div class="a" style="left:2684px;top:788px;width:68px;height:2px;background:#e2e2e2"></div>
<div class="a" style="left:2684px;top:790px;width:68px;height:72px;background:#52b3ac"></div>
<svg class="a" style="left:2696px;top:435px;" width="50" height="45" viewBox="0 0 50 45"><path d="M23.8 8.3H12.5A3 3 0 0 0 9.5 11.3V34.3A3 3 0 0 0 12.5 37.3H30.3A3 3 0 0 0 33.3 34.3V25.1M15.3 16.3H21M15.3 23H24.3M15.3 29.5H27.2M31.6 12.4V16H28.7" fill="none" stroke="#606060" stroke-width="2.6" stroke-linecap="round" stroke-linejoin="round"/><circle cx="31.3" cy="15.5" r="6" fill="none" stroke="#606060" stroke-width="2.6" stroke-linecap="round" stroke-linejoin="round"/></svg>
<svg class="a" style="left:2696px;top:505px;" width="50" height="50" viewBox="0 0 50 50"><path d="M33.9 25.8A6.8 6.8 0 1 0 24.7 15.6L13 27.7A6.6 6.6 0 0 0 22.4 37.1L27.5 32.3A3.55 3.55 0 0 0 22.5 27.3L17.2 31.9" fill="none" stroke="#606060" stroke-width="2.6" stroke-linecap="round" stroke-linejoin="round"/></svg>
<svg class="a" style="left:2696px;top:575px;" width="50" height="50" viewBox="0 0 50 50"><path d="M32.3 40.6A14.5 14.5 0 1 1 35.9 37" fill="none" stroke="#606060" stroke-width="2.6" stroke-linecap="round" stroke-linejoin="round"/><path d="M16.3 26H31.7M16.3 26L20.8 22.8M16.3 31.6H31.7L27.2 35" fill="none" stroke="#606060" stroke-width="2.6" stroke-linecap="round" stroke-linejoin="round"/></svg>
<svg class="a" style="left:2696px;top:650px;" width="50" height="50" viewBox="0 0 50 50"><circle cx="24" cy="26" r="14.5" fill="none" stroke="#606060" stroke-width="2.6" stroke-linecap="round" stroke-linejoin="round"/><path d="M20.8 16.8L17 24.3M19.6 20H31.5L29.2 24.5M24 24Q24 30.5 16.5 34M24.3 28Q25.5 32 31.5 34" fill="none" stroke="#606060" stroke-width="2.6" stroke-linecap="round" stroke-linejoin="round"/></svg>
<svg class="a" style="left:2696px;top:650px;" width="50" height="120" viewBox="0 0 50 120"><path d="M14.8 83.3H33A4 4 0 0 1 37 87.3V93.2A5 5 0 0 0 37 103.2V108.4A4 4 0 0 1 33 112.4H14.8A4 4 0 0 1 10.8 108.4V103.2A5 5 0 0 0 10.8 93.2V87.3A4 4 0 0 1 14.8 83.3Z" fill="none" stroke="#606060" stroke-width="2.6" stroke-linecap="round" stroke-linejoin="round"/><path d="M18.6 88.3L24 94.5L29.4 88.3M18 98H30M18 103.4H30M24 94.5V108.3" fill="none" stroke="#606060" stroke-width="2.6" stroke-linecap="round" stroke-linejoin="round"/></svg>
<svg class="a" style="left:2696px;top:795px;" width="50" height="50" viewBox="0 0 50 50"><g fill="none" stroke="#fff" stroke-width="2.6" stroke-linecap="round" stroke-linejoin="round"><path d="M9.5 25.9V15.5A3 3 0 0 1 12.5 12.5H23.1M38.5 27.9V38.5A3 3 0 0 1 35.5 41.5H25.1M27.1 23.9L36.5 14.5M30 12.5H38.5V20.7M21.1 29.9L11.5 39.5M9.5 33V41.5H17.9"/></g><path d="M38.5 12.5H32L38.5 19Z M9.5 41.5H16L9.5 35Z" fill="#fff"/></svg>
<div class="t" style="left:55px;top:945.5px;font-size:28px;color:#222;">收款信息</div>
<div class="t" style="left:92px;top:1004.5px;font-size:24px;color:#666;">金额合计</div>
<div class="t" style="left:213px;top:1003.0px;font-size:24px;color:#222;"><span style="font-size:26px">626.50</span></div>
<div class="t" style="left:493px;top:1004.5px;font-size:24px;color:#666;">随单订金</div>
<div class="t" style="left:614px;top:1003.0px;font-size:24px;color:#222;"><span style="font-size:26px">0.00</span></div>
<div class="t" style="left:92px;top:1060.0px;font-size:24px;color:#666;">成交金额</div>
<div class="t" style="left:213px;top:1059.0px;font-size:24px;color:#222;"><span style="font-size:26px">626.50</span></div>
<div class="t" style="left:493px;top:1060.0px;font-size:24px;color:#666;">结算方式</div>
<div class="a" style="left:615px;top:1081.5px;width:12px;height:2.0px;background:#222"></div>
<div class="a" style="left:629.5px;top:1081.5px;width:12.0px;height:2.0px;background:#222"></div>
<div class="a" style="left:0px;top:1364px;width:2714px;height:16px;background:linear-gradient(180deg,rgba(0,0,0,0) 0,rgba(0,0,0,0.025) 55%,rgba(0,0,0,0.095) 100%)"></div>
<div class="a" style="left:0px;top:1380px;width:2714px;height:94px;background:#fff"></div>
<div class="t" style="left:34px;top:1394.5px;font-size:24px;color:#666;">制单人：张阳</div>
<div class="t" style="left:258px;top:1394.5px;font-size:24px;color:#666;">打印次数：0次</div>
<div class="t" style="left:34px;top:1430.0px;font-size:24px;color:#333;">2019–12–26 12:28:17</div>
<svg class="a" style="left:1797px;top:1423px;" width="30" height="30" viewBox="0 0 30 30"><circle cx="15" cy="15" r="14" fill="none" stroke="#aaa" stroke-width="1.6"/><path d="M8.5 10.5h14.5v9.5a1.5 1.5 0 0 1-1.5 1.5H10a1.5 1.5 0 0 1-1.5-1.5z M12 10.5v-1a3.8 3.8 0 0 1 7.6 0v1" fill="none" stroke="#aaa" stroke-width="1.4"/></svg>
<div class="t" style="left:1833px;top:1418.0px;font-size:26px;color:#111;">商品种类：</div>
<div class="t" style="left:1962px;top:1418.5px;font-size:30px;color:#f08c4e;">5</div>
<div class="t" style="left:1988px;top:1419.0px;font-size:28px;color:#666;">种</div>
<div class="a" style="left:2130px;top:1396px;width:164px;height:72px;box-sizing:border-box;border:2px solid #bdbdbd;border-radius:6px;background:#fff"></div>
<div class="t" style="left:2181px;top:1412.5px;font-size:32px;color:#333;">修改</div>
<div class="a" style="left:2318px;top:1396px;width:164px;height:72px;box-sizing:border-box;border:2px solid #bdbdbd;border-radius:6px;background:#fff"></div>
<div class="t" style="left:2369px;top:1412.5px;font-size:32px;color:#333;">删除</div>
<div class="a" style="left:2506px;top:1396px;width:164px;height:72px;box-sizing:border-box;border:2px solid #bdbdbd;border-radius:6px;background:#fff"></div>
<div class="t" style="left:2557px;top:1412.5px;font-size:32px;color:#333;">收款</div>
<div class="a" style="left:2180px;top:164px;width:232px;height:360px;background:#fff;border-radius:7px;box-shadow:0 6px 18px rgba(0,0,0,0.22)"></div>
<div class="a" style="left:2289px;top:157px;width:14px;height:14px;background:#fff;transform:rotate(45deg);box-shadow:-2px -2px 4px rgba(0,0,0,0.06)"></div>
<div class="a" style="left:2260px;top:164px;width:80px;height:16px;background:#fff"></div>
<svg class="a" style="left:2220px;top:187px;" width="25" height="26" viewBox="0 0 25 26"><circle cx="12" cy="12" r="11" fill="none" stroke="#f08c4e" stroke-width="1.9"/><path d="M16.3 5.6Q11 7 6.8 7.3M6.3 10.5H16.8M5.8 13.7H17.2M11.3 7V16.5Q11.3 18.2 13 18.2H17.5V16" fill="none" stroke="#f08c4e" stroke-width="1.7"/></svg>
<div class="t" style="left:2252px;top:180.0px;font-size:24px;color:#333;">毛利预估</div>
<svg class="a" style="left:2220px;top:235px;" width="25" height="26" viewBox="0 0 25 26"><path d="M22.34 15.76A11 11 0 1 0 19.78 19.78" fill="none" stroke="#f08c4e" stroke-width="1.9"/><path d="M4.3 4.3L19.9 19.9" stroke="#f08c4e" stroke-width="1.9"/></svg>
<div class="t" style="left:2252px;top:228.0px;font-size:24px;color:#333;">中止</div>
<svg class="a" style="left:2220px;top:283px;" width="25" height="26" viewBox="0 0 25 26"><path d="M13.8 21.4H6.6A3 3 0 0 1 3.6 18.4V6.6L8.6 1.2H17.7A3 3 0 0 1 20.7 4.2V12M8.8 1.5V6.6H3.8M10 17.4H21M16.3 12.8L20.9 17.4L16.3 22" fill="none" stroke="#f08c4e" stroke-width="1.9"/></svg>
<div class="t" style="left:2252px;top:276.0px;font-size:24px;color:#333;">变更</div>
<svg class="a" style="left:2220px;top:331px;" width="25" height="26" viewBox="0 0 25 26"><path d="M13.8 21.4H6.6A3 3 0 0 1 3.6 18.4V6.6L8.6 1.2H17.7A3 3 0 0 1 20.7 4.2V12M8.8 1.5V6.6H3.8M10 17.4H21M16.3 12.8L20.9 17.4L16.3 22" fill="none" stroke="#f08c4e" stroke-width="1.9"/></svg>
<div class="t" style="left:2252px;top:324.0px;font-size:24px;color:#333;">可用量提取</div>
<svg class="a" style="left:2220px;top:379px;" width="25" height="26" viewBox="0 0 25 26"><path d="M13.8 21.4H6.6A3 3 0 0 1 3.6 18.4V6.6L8.6 1.2H17.7A3 3 0 0 1 20.7 4.2V12M8.8 1.5V6.6H3.8M10 17.4H21M16.3 12.8L20.9 17.4L16.3 22" fill="none" stroke="#f08c4e" stroke-width="1.9"/></svg>
<div class="t" style="left:2252px;top:372.0px;font-size:24px;color:#333;">消息</div>
<svg class="a" style="left:2220px;top:427px;" width="25" height="26" viewBox="0 0 25 26"><path d="M11.6 23.2L5 14.8A8.4 8.4 0 1 1 18.2 14.8Z" fill="none" stroke="#f08c4e" stroke-width="1.9" stroke-linejoin="round"/><circle cx="11.6" cy="9.6" r="3.6" fill="none" stroke="#f08c4e" stroke-width="1.9"/></svg>
<div class="t" style="left:2252px;top:420.0px;font-size:24px;color:#333;">定位</div>
<svg class="a" style="left:2220px;top:475px;" width="25" height="26" viewBox="0 0 25 26"><path d="M22.2 13A10.1 10.1 0 1 1 18.6 4.3" fill="none" stroke="#f08c4e" stroke-width="1.9"/><path d="M17 8H22.2V3" fill="none" stroke="#f08c4e" stroke-width="1.9"/></svg>
<div class="t" style="left:2252px;top:468.0px;font-size:24px;color:#333;">刷新</div>
<div class="a" style="left:2188px;top:216px;width:215px;height:55px;box-sizing:border-box;border:6px solid #ee5024;border-radius:13px"></div>
</body></html>
